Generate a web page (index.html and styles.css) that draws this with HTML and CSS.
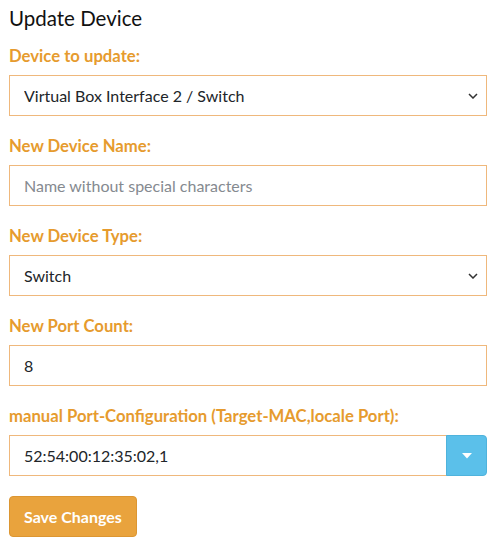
FILE: index.html
```html
<!DOCTYPE html>
<html>
<head>
<meta charset="utf-8">
<link rel="stylesheet" href="styles.css">
</head>
<body>
<div class="page">
  <h1 class="title">Update Device</h1>
  <div class="group">
    <label class="label">Device to update:</label>
    <div class="select-wrap">
      <select class="control select"><option>Virtual Box Interface 2 / Switch</option></select>
      <svg class="chev" width="10" height="6" viewBox="0 0 10 6"><path d="M1 1l4 4 4-4" fill="none" stroke="#333" stroke-width="1.5"/></svg>
    </div>
  </div>
  <div class="group">
    <label class="label">New Device Name:</label>
    <input class="control" type="text" placeholder="Name without special characters">
  </div>
  <div class="group">
    <label class="label">New Device Type:</label>
    <div class="select-wrap">
      <select class="control select"><option>Switch</option></select>
      <svg class="chev" width="10" height="6" viewBox="0 0 10 6"><path d="M1 1l4 4 4-4" fill="none" stroke="#333" stroke-width="1.5"/></svg>
    </div>
  </div>
  <div class="group">
    <label class="label">New Port Count:</label>
    <input class="control" type="text" value="8">
  </div>
  <div class="group">
    <label class="label">manual Port-Configuration (Target-MAC,locale Port):</label>
    <div class="input-group">
      <input class="control grow" type="text" value="52:54:00:12:35:02,1">
      <button class="drop" type="button"><svg width="10" height="6" viewBox="0 0 10 6"><path d="M0 0h10L5 5.5z" fill="#fff"/></svg></button>
    </div>
  </div>
  <button class="save" type="button">Save Changes</button>
</div>
</body>
</html>
```
FILE: styles.css
```css
* { box-sizing: border-box; }
html, body { margin: 0; padding: 0; background: #fff; }
body { font-family: "Lato", "Open Sans", sans-serif; color: #212529; }
.page { width: 478px; margin-left: 9px; padding-top: 6px; }
.title { font-size: 20.5px; font-weight: 400; line-height: 24px; margin: 0 0 14px 0; color: #111; }
.group { display: flex; flex-direction: column; margin-bottom: 18px; }
.label { font-size: 16.7px; font-weight: 700; line-height: 24px; color: #e69b2e; margin-bottom: 7px; }
.control { display: block; width: 100%; height: 41px; border: 1px solid #efb87c; border-radius: 0; padding: 0 14px; font-family: inherit; font-size: 16px; color: #212529; background: #fff; outline: none; }
.control::placeholder { color: #858a90; }
.select-wrap { position: relative; }
.select { appearance: none; -webkit-appearance: none; }
.chev { position: absolute; right: 9px; top: 18px; pointer-events: none; }
.input-group { display: flex; }
.grow { flex: 1; width: auto; }
.drop { width: 41px; height: 41px; border: 1px solid #4fb3dc; background: #5bc0ea; border-radius: 0 4px 4px 0; display: flex; align-items: center; justify-content: center; padding: 0; margin-left: -1px; }
.save { margin-top: 2px; height: 41px; padding: 0 14px; background: #e9a33d; border: 1px solid #dc9632; border-radius: 4px; color: #fff; font-family: inherit; font-size: 16px; font-weight: 700; }
```
